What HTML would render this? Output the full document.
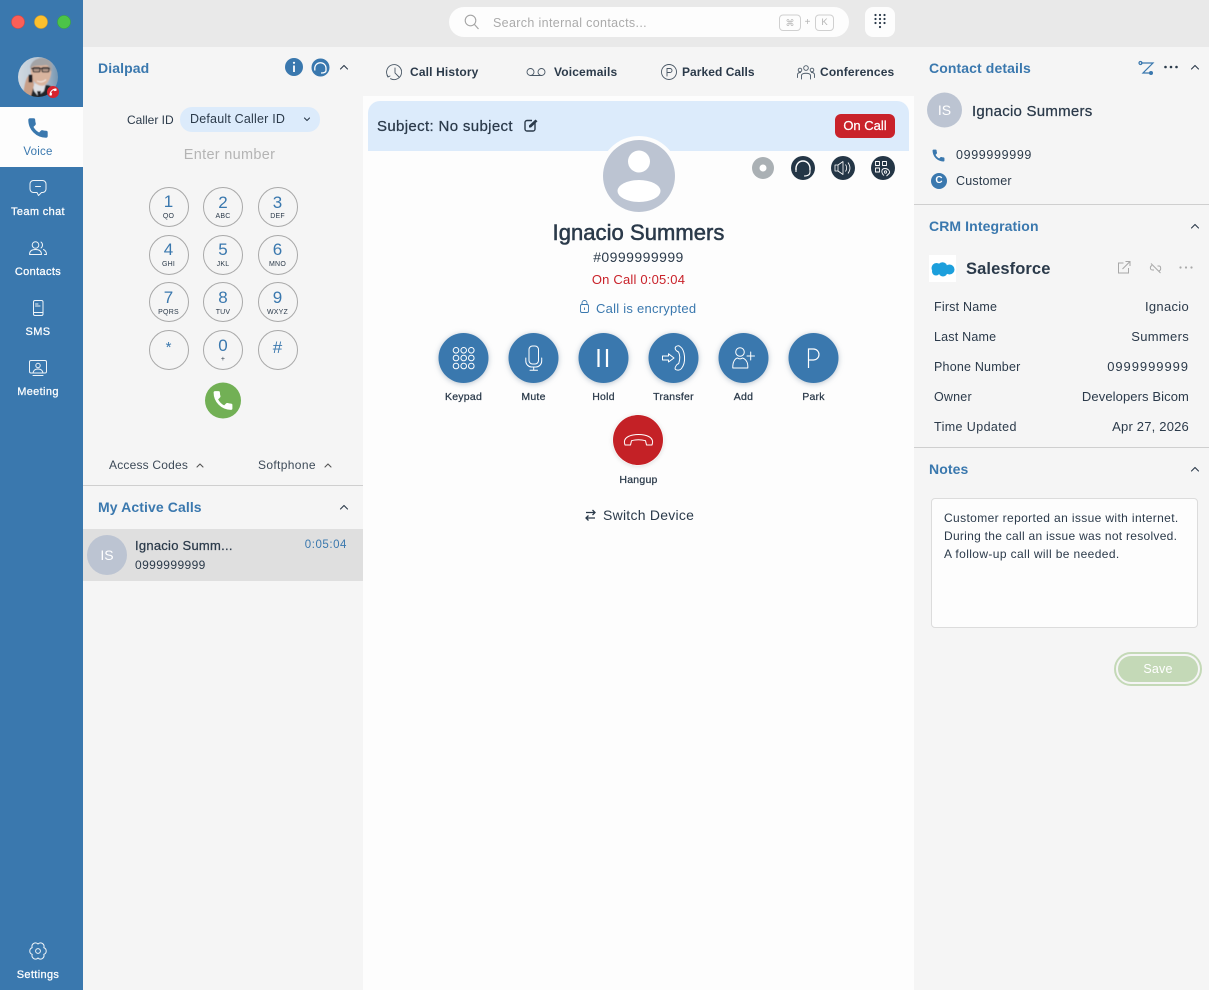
<!DOCTYPE html>
<html><head><meta charset="utf-8"><title>Softphone</title>
<style>
html,body{margin:0;padding:0}
body{width:1209px;height:990px;position:relative;overflow:hidden;background:#f5f5f5;font-family:"Liberation Sans",sans-serif;color:#2b3a4a;font-size:12px}
.b{position:absolute}
.t{position:absolute;white-space:nowrap;line-height:20px;height:20px;margin-top:-10px}
.c{transform:translateX(-50%)}
.m{-webkit-text-stroke:.25px currentColor}
.h{font-size:14px;font-weight:bold;color:#3a78ae;letter-spacing:.1px}
.w{color:#fff}
.bl{color:#3a78ae}
.k{position:absolute;width:38px;height:38px;border:1px solid #a9a9a9;border-radius:50%;margin:-20px 0 0 -20px}
.d{font-size:17px;color:#3a78ae}
.l{font-size:7px;color:#2b3a4a;letter-spacing:.2px}
.n{font-size:12.5px;letter-spacing:.2px}
.v{font-size:13px;letter-spacing:.3px}
.s{font-size:11px;letter-spacing:.35px}
.tab{font-size:12px;font-weight:bold;color:#2b3a4a;letter-spacing:.15px}
.a{font-size:10.5px;color:#2b3a4a;letter-spacing:.25px}
svg{position:absolute;left:0;top:0}
</style></head><body>
<div class="b" style="left:0;top:0;width:83px;height:990px;background:#3a78ae"></div>
<div class="b" style="left:83px;top:0;width:1126px;height:47px;background:#e9e9e9"></div>
<div class="b" style="left:0;top:107px;width:83px;height:60px;background:#fdfdfd"></div>
<div class="b" style="left:363px;top:96px;width:551px;height:894px;background:#fdfdfd"></div>
<div class="b" style="left:368px;top:101px;width:541px;height:50px;background:#dcebfb;border-radius:12px 12px 0 0"></div>
<div class="b" style="left:449px;top:7px;width:400px;height:30px;background:#fdfdfd;border-radius:15px"></div>
<div class="b" style="left:865px;top:7px;width:30px;height:30px;background:#fdfdfd;border-radius:8px"></div>
<div class="b" style="left:180px;top:107px;width:140px;height:25px;background:#dcebfb;border-radius:12px"></div>
<div class="b" style="left:83px;top:485px;width:280px;height:1px;background:#cfcfcf"></div>
<div class="b" style="left:83px;top:529px;width:280px;height:52px;background:#dfdfdf"></div>
<div class="b" style="left:914px;top:204px;width:295px;height:1px;background:#cfcfcf"></div>
<div class="b" style="left:914px;top:447px;width:295px;height:1px;background:#cfcfcf"></div>
<div class="b" style="left:929px;top:255px;width:27px;height:27px;background:#fff"></div>
<div class="b" style="left:931px;top:498px;width:265px;height:128px;background:#fdfdfd;border:1px solid #dcdcdc;border-radius:4px"></div>
<div class="b" style="left:835px;top:114px;width:60px;height:24px;background:#c9222a;border-radius:6px"></div>
<div class="b" style="left:1114px;top:652px;width:84px;height:30px;border:2px solid #c4d9b7;border-radius:17px"></div>
<div class="b" style="left:1118px;top:656px;width:80px;height:26px;background:#c4d9b7;border-radius:13px"></div>

<svg width="1209" height="990" viewBox="0 0 1209 990">
<defs>
<symbol id="ph" viewBox="0 0 24 24" overflow="visible"><path d="M6.62 10.79c1.44 2.83 3.76 5.14 6.59 6.59l2.2-2.2c.27-.27.67-.36 1.02-.24 1.12.37 2.33.57 3.57.57.55 0 1 .45 1 1V20c0 .55-.45 1-1 1-9.39 0-17-7.61-17-17 0-.55.45-1 1-1h3.5c.55 0 1 .45 1 1 0 1.25.2 2.45.57 3.57.11.35.03.74-.25 1.02l-2.2 2.2z"/></symbol>
<clipPath id="av"><circle cx="38" cy="77" r="20"/></clipPath>
<clipPath id="big"><circle cx="639" cy="176" r="36"/></clipPath>
<linearGradient id="bgp" x1="0" y1="0" x2="1" y2="0"><stop offset="0" stop-color="#d3dbe3"/><stop offset=".6" stop-color="#b4c3d1"/><stop offset="1" stop-color="#6f90ad"/></linearGradient>
<filter id="soft" x="-10%" y="-10%" width="120%" height="120%"><feGaussianBlur stdDeviation=".45"/></filter>
</defs>
<!-- traffic lights -->
<circle cx="18" cy="22" r="6.5" fill="#fb5f57" stroke="#e0443e" stroke-width=".6"/>
<circle cx="41" cy="22" r="6.5" fill="#fcc02e" stroke="#dfa123" stroke-width=".6"/>
<circle cx="64" cy="22" r="6.5" fill="#4cc448" stroke="#3aa935" stroke-width=".6"/>
<!-- user photo -->
<g clip-path="url(#av)"><g filter="url(#soft)">
<rect x="16" y="55" width="44" height="44" fill="url(#bgp)"/>
<path d="M20 100 C21 90 29 86 36 85 L48 85 C54 87 58 92 60 100Z" fill="#24252c"/>
<path d="M32 84 L46 83 L44 91 L38 96 L34 91Z" fill="#dfe1e5"/>
<path d="M37 91 L41 91 L40 97 L38 97Z" fill="#1a1a20"/>
<path d="M31 66 C34 60 47 60 51 67 C52 74 50 81 45 85 C41 87 36 85 33 80 C31 76 30 71 31 66Z" fill="#d9b49e"/>
<path d="M30 68 C31 60 39 57 45 58 C50 59 53 63 52 71 L50 71 C50 67 48 65 46 65 C40 66 35 65 32 67Z" fill="#a3a3a5"/>
<path d="M31 68.5 H50" stroke="#1f1f24" stroke-width="1.300"/>
<rect x="33" y="67.500" width="7" height="4.500" rx="1.500" fill="#8f7d74" fill-opacity=".55" stroke="#1f1f24" stroke-width="1.100"/>
<rect x="42" y="67.500" width="7" height="4.500" rx="1.500" fill="#8f7d74" fill-opacity=".55" stroke="#1f1f24" stroke-width="1.100"/>
<path d="M37 81 C40 82.500 44 82 46 79.500" stroke="#f0e4dc" stroke-width="1.200" fill="none"/>
<path d="M23 96 C24 88 25 80 28 76 L33 78 L34 85 L31 96Z" fill="#c89f88"/>
<rect x="28.500" y="74.500" width="4" height="8" rx="1" fill="#1c1c20"/>
</g></g>
<circle cx="53" cy="92" r="6" fill="#d8232d"/>
<use href="#ph" x="48.5" y="87.5" width="9" height="9" fill="#fff" stroke="#fff" stroke-width="1" transform="rotate(90 53 92)"/>
<!-- sidebar icons -->
<g transform="translate(26 116)"><use href="#ph" width="24" height="24" fill="#3a78ae" stroke="#3a78ae" stroke-width="1.400" stroke-linejoin="round"/></g>
<g fill="none" stroke="#fff" stroke-width="1" stroke-linejoin="round" stroke-linecap="round" opacity=".92">
<path d="M33.5 180.5 H42.5 A3.5 3.5 0 0 1 46 184 V189 A3.5 3.5 0 0 1 42.5 192.5 H41.5 L38.5 195.5 L37 192.5 H33.5 A3.5 3.5 0 0 1 30 189 V184 A3.5 3.5 0 0 1 33.5 180.5Z"/>
<path d="M35.5 186.5 H40.5"/>
<circle cx="35.5" cy="245" r="3.3"/>
<path d="M29.5 254.5 C29.5 250.5 32 249.5 35.5 249.5 C39 249.5 41.5 250.5 41.5 254.5Z"/>
<path d="M41 242 C43 243.5 43 246.5 41 248 M43.5 249.5 C45.5 250.5 46.5 252 46.5 254.5 H44.5"/>
<rect x="33.5" y="300.5" width="9.5" height="15" rx="1.5"/>
<path d="M33.5 312.5 H43 M35.5 304 H38 M35.5 306 H40"/>
<rect x="29.5" y="360.5" width="17" height="12.5" rx="1.5"/>
<path d="M33 375.5 H43"/>
<circle cx="38" cy="365.5" r="2.2"/>
<path d="M33 373 C33.5 370 35.5 369 38 369 C40.5 369 42.5 370 43 373"/>
<path d="M38 944 A3.5 3.5 0 0 1 43.8 947.6 A3.6 3.6 0 0 1 43.8 954.4 A3.5 3.5 0 0 1 38 958 A3.5 3.5 0 0 1 32.2 954.4 A3.6 3.6 0 0 1 32.2 947.6 A3.5 3.5 0 0 1 38 944Z"/>
<circle cx="38" cy="951" r="2.4"/>
</g>
<!-- dialpad header -->
<circle cx="294" cy="67" r="9" fill="#3a78ae"/>
<circle cx="320.500" cy="67.500" r="9" fill="#3a78ae"/>
<circle cx="294" cy="62.800" r="1.100" fill="#fff"/><path d="M294 65.500V72" stroke="#fff" stroke-width="1.800"/>
<path d="M314.800 68.500 C314.800 60.800 326 60.800 326 68.500 M314.800 67.500 v3 M326 67.500 v3 M326 70.500 C326 72.500 323.500 73 321 73" fill="none" stroke="#fff" stroke-width="1.300"/>
<g fill="none" stroke="#2b3a4a" stroke-width="1.100" stroke-linecap="round" stroke-linejoin="round">
<path d="M340.500 69 L344 65.500 L347.500 69"/>
<path d="M340.500 509 L344 505.500 L347.500 509"/>
<path d="M1191.500 69 L1195 65.500 L1198.500 69"/>
<path d="M1191.500 228 L1195 224.500 L1198.500 228"/>
<path d="M1191.500 471 L1195 467.500 L1198.500 471"/>
<path d="M304.500 118 L307 120.500 L309.500 118"/>
<path d="M197 467 L200 464 L203 467" stroke="#555"/>
<path d="M325 467 L328 464 L331 467" stroke="#555"/>
</g>
<!-- green call -->
<circle cx="223" cy="400.500" r="18" fill="#72b055"/>
<use href="#ph" x="211" y="388.500" width="24" height="24" fill="#fff" stroke="#fff" stroke-width=".8"/>
<!-- search -->
<circle cx="470.500" cy="20.500" r="5.300" fill="none" stroke="#a5a5a5" stroke-width="1.100"/><path d="M474.500 24.500 L478.500 29" stroke="#a5a5a5" stroke-width="1.200"/>
<rect x="779.500" y="15" width="21" height="15.500" rx="3.500" fill="none" stroke="#d0d0d0"/>
<rect x="815.500" y="15" width="18" height="15.500" rx="3.500" fill="none" stroke="#d0d0d0"/>
<g fill="#2b3a4a"><circle cx="875.500" cy="15" r="1.100"/><circle cx="880" cy="15" r="1.100"/><circle cx="884.500" cy="15" r="1.100"/><circle cx="875.500" cy="19" r="1.100"/><circle cx="880" cy="19" r="1.100"/><circle cx="884.500" cy="19" r="1.100"/><circle cx="875.500" cy="23" r="1.100"/><circle cx="880" cy="23" r="1.100"/><circle cx="884.500" cy="23" r="1.100"/><circle cx="880" cy="27" r="1.100"/></g>
<!-- tabs -->
<g fill="none" stroke="#4a5866" stroke-width=".9" stroke-linecap="round">
<path d="M388 76.500 A7.500 7.500 0 1 1 390.500 78.700"/><path d="M395 68 V73 L399 77"/><path d="M387 75 L388 77 L390 76"/>
<circle cx="530.500" cy="72" r="3.500"/><circle cx="541.500" cy="72" r="3.500"/><path d="M530.500 75.500 H541.500"/>
<circle cx="669" cy="72" r="7.500"/>
<path d="M667 76 V68.500 H670 A2 2 0 0 1 670 72.500 H667"/>
<circle cx="806" cy="68" r="2.300"/><circle cx="800" cy="70" r="1.800"/><circle cx="812" cy="70" r="1.800"/>
<path d="M801.500 79 V75.500 C801.500 72.500 810.500 72.500 810.500 75.500 V79 M797.500 77.500 V75 C797.500 73 799 72.500 800.500 72.500 M814.500 77.500 V75 C814.500 73 813 72.500 811.500 72.500"/>
</g>
<!-- subject edit -->
<path d="M535 123 V129 A2 2 0 0 1 533 131 H527 A2 2 0 0 1 525 129 V122.500 A2 2 0 0 1 527 120.500 H532" fill="none" stroke="#2b3a4a" stroke-width="1.400"/>
<path d="M529 127.500 V125.500 L535.500 119.500 L537.500 121.200 L531 127.500Z" fill="#2b3a4a"/>
<!-- big avatar -->
<circle cx="639" cy="176" r="40" fill="#fdfdfd"/>
<circle cx="639" cy="176" r="36" fill="#bcc4d2"/>
<g clip-path="url(#big)"><circle cx="639" cy="161.500" r="11" fill="#fff"/><ellipse cx="639" cy="191" rx="21.500" ry="11" fill="#fff"/></g>
<!-- small round action icons -->
<circle cx="763" cy="168" r="11" fill="#aab0b4"/><circle cx="763" cy="168" r="3.500" fill="#fff"/>
<circle cx="803" cy="168" r="12" fill="#243646"/>
<circle cx="843" cy="168" r="12" fill="#243646"/>
<circle cx="883" cy="168" r="12" fill="#243646"/>
<g fill="none" stroke="#fff" stroke-width="1.100" stroke-linejoin="round">
<path d="M796 170 C795 158 811 158 810 170" stroke-width="1.400"/><path d="M796 168 v4 M810 168 v4 M810 172 C810 175 807 176 804 176"/>
<path d="M835 165 H838 L843 161.500 V174.500 L838 171 H835Z" stroke-width=".8"/><path d="M838 165 V171 M845.500 164.500 C847 166.500 847 169.500 845.500 171.500 M848 162.500 C850.500 166 850.500 170 848 173.500" stroke-width=".8"/>
<path d="M875.500 161.500 h4 v4 h-4z M882.500 161.500 h4 v4 h-4z M875.500 168 h4 v4 h-4z" stroke-width=".9"/>
<path d="M884 175.500 C881 173 881 168.500 885 168.500 C888 168.500 890 171 889.500 173 L886.500 176" stroke-width=".9"/><circle cx="885.500" cy="172" r="1.200" stroke-width=".8"/>
</g>
<!-- lock -->
<g fill="none" stroke="#3a78ae" stroke-width=".9"><rect x="580.500" y="304.500" width="8" height="8" rx="1.500"/><path d="M582 304.500 V303 A2.500 2.500 0 0 1 587 303 V304.500"/><path d="M584.500 307.500 V310"/></g>
<!-- action buttons -->
<g style="filter:drop-shadow(0 1px 3px rgba(60,90,120,.35))">
<circle cx="463.500" cy="358" r="25" fill="#3a78ae"/><circle cx="533.500" cy="358" r="25" fill="#3a78ae"/><circle cx="603.500" cy="358" r="25" fill="#3a78ae"/><circle cx="673.500" cy="358" r="25" fill="#3a78ae"/><circle cx="743.500" cy="358" r="25" fill="#3a78ae"/><circle cx="813.500" cy="358" r="25" fill="#3a78ae"/>
</g>
<circle cx="638" cy="440" r="25.500" fill="#fff" style="filter:drop-shadow(0 1px 2px rgba(0,0,0,.12))"/>
<circle cx="638" cy="440" r="25" fill="#c42126"/>
<g fill="none" stroke="#fff" stroke-width="1" stroke-linejoin="round" stroke-linecap="round">
<circle cx="456" cy="350.300" r="2.800"/><circle cx="463.700" cy="350.300" r="2.800"/><circle cx="471.300" cy="350.300" r="2.800"/><circle cx="456" cy="358" r="2.800"/><circle cx="463.700" cy="358" r="2.800"/><circle cx="471.300" cy="358" r="2.800"/><circle cx="456" cy="366" r="2.800"/><circle cx="463.700" cy="366" r="2.800"/><circle cx="471.300" cy="366" r="2.800"/>
<rect x="529" y="346" width="9.500" height="18" rx="3.500"/>
<path d="M525.800 358 V361 A6 6 0 0 0 531.500 367 H536 A6 6 0 0 0 541.700 361 V358 M533.700 367 V370 M530 370.300 H537.500"/>
<path d="M598.500 349 V367 M607 349 V367" stroke-width="2.200" stroke-linecap="butt"/>
<path d="M662.500 356 H668.500 V353.800 L674 358 L668.500 362 V360 H662.500Z"/>
<path d="M675.500 347 C677 345.500 679 345.500 680 346.500 C685 350 686.500 362 681.500 368.500 C680 370.500 677 370.500 675.500 369.500 C674.500 368.500 675 367 677 364.500 C678.500 364 679 363.500 679 362.500 C680 359 680 355 678.500 352 C676 351 674.500 349 675.500 347Z"/>
<circle cx="740" cy="352" r="4.300"/><path d="M732.800 368 C732.500 362 735 358.500 737.500 358 C739 359 741 359 742.500 358 C745.500 359 748.200 362 747.800 368Z"/>
<path d="M747 356 H754.500 M750.700 352 V360"/>
<path d="M808.500 368 V349 H813.500 A5.500 5.500 0 0 1 813.500 360 H808.500" stroke-width="1.200" stroke-linecap="butt" stroke-linejoin="miter"/>
<path d="M624.500 443 C623.500 437 631 434.500 638.500 434.500 C646 434.500 653.500 437 652.500 443 L652 445 L646.500 445 L645.500 440.700 C641 439.500 636 439.500 631.500 440.700 L630.500 445 L625 445Z"/>
</g>
<!-- switch device -->
<g fill="none" stroke="#2b3a4a" stroke-width="1.300"><path d="M586 512.500 H595 M592.500 510 L595 512.500 L592.500 515"/><path d="M595 518 H586 M588.500 515.500 L586 518 L588.500 520.500"/></g>
<!-- right panel icons -->
<g fill="none" stroke="#3a78ae" stroke-width="1.200"><path d="M1141 63 H1153 L1143 73 H1150"/><circle cx="1140.500" cy="63" r="1.500"/></g><circle cx="1151" cy="73" r="2" fill="#3a78ae"/>
<g fill="#2b3a4a"><circle cx="1165.500" cy="67" r="1.300"/><circle cx="1171" cy="67" r="1.300"/><circle cx="1176.500" cy="67" r="1.300"/></g>
<use href="#ph" x="931" y="148" width="15" height="15" fill="#3a78ae" stroke="#3a78ae" stroke-width="1"/>
<circle cx="939" cy="181" r="8" fill="#3a78ae"/>
<!-- salesforce -->
<g fill="#1c9fdc"><circle cx="936.500" cy="268" r="5"/><circle cx="942.500" cy="267" r="4.800"/><circle cx="949.500" cy="269.500" r="5"/><circle cx="943" cy="272" r="4.500"/><circle cx="936" cy="271.500" r="4"/></g>
<g fill="none" stroke="#a8a8a8" stroke-width="1"><path d="M1128.500 268 V273 H1118.500 V263 H1123.500 M1122.500 269 L1130 261.500 M1125.500 261.500 H1130 V266"/><path d="M1152 265.500 C1149.500 266.500 1150 270 1152.500 270 L1154 270 M1157.500 266 L1159 266 C1161 266 1161.500 270 1159 271 M1151 263.500 L1160.500 273"/></g>
<g fill="#a8a8a8"><circle cx="1180.500" cy="267.500" r="1.100"/><circle cx="1186" cy="267.500" r="1.100"/><circle cx="1191.500" cy="267.500" r="1.100"/></g>
<!-- avatars -->
<circle cx="107" cy="555" r="20" fill="#bcc4d2"/>
<circle cx="944.500" cy="110" r="17.500" fill="#bcc4d2"/>
</svg>

<!-- sidebar labels -->
<div class="t c bl" style="left:38px;top:152px;font-size:11.500px;letter-spacing:.2px">Voice</div>
<div class="t c w m s" style="left:38px;top:212px">Team chat</div>
<div class="t c w m s" style="left:38px;top:272px">Contacts</div>
<div class="t c w m s" style="left:38px;top:332px">SMS</div>
<div class="t c w m s" style="left:38px;top:392px">Meeting</div>
<div class="t c w m s" style="left:38px;top:975px">Settings</div>

<!-- dialpad -->
<div class="t h" style="left:98px;top:68px">Dialpad</div>
<div class="t" style="left:127px;top:120px;font-size:12px">Caller ID</div>
<div class="t" style="left:190px;top:119px;font-size:12.500px;letter-spacing:.2px">Default Caller ID</div>
<div class="t c" style="left:229.500px;top:155px;font-size:14.500px;color:#b4b4b4;letter-spacing:.3px">Enter number</div>

<div class="k" style="left:168.500px;top:207px"></div><div class="k" style="left:223px;top:207px"></div><div class="k" style="left:277.500px;top:207px"></div>
<div class="k" style="left:168.500px;top:254.500px"></div><div class="k" style="left:223px;top:254.500px"></div><div class="k" style="left:277.500px;top:254.500px"></div>
<div class="k" style="left:168.500px;top:302px"></div><div class="k" style="left:223px;top:302px"></div><div class="k" style="left:277.500px;top:302px"></div>
<div class="k" style="left:168.500px;top:350px"></div><div class="k" style="left:223px;top:350px"></div><div class="k" style="left:277.500px;top:350px"></div>

<div class="t c d" style="left:168.500px;top:202px">1</div><div class="t c l" style="left:168.500px;top:217px">QO</div>
<div class="t c d" style="left:223px;top:203px">2</div><div class="t c l" style="left:223px;top:217px">ABC</div>
<div class="t c d" style="left:277.500px;top:203px">3</div><div class="t c l" style="left:277.500px;top:217px">DEF</div>
<div class="t c d" style="left:168.500px;top:250px">4</div><div class="t c l" style="left:168.500px;top:264.500px">GHI</div>
<div class="t c d" style="left:223px;top:250px">5</div><div class="t c l" style="left:223px;top:264.500px">JKL</div>
<div class="t c d" style="left:277.500px;top:250px">6</div><div class="t c l" style="left:277.500px;top:264.500px">MNO</div>
<div class="t c d" style="left:168.500px;top:298px">7</div><div class="t c l" style="left:168.500px;top:312.500px">PQRS</div>
<div class="t c d" style="left:223px;top:298px">8</div><div class="t c l" style="left:223px;top:312.500px">TUV</div>
<div class="t c d" style="left:277.500px;top:298px">9</div><div class="t c l" style="left:277.500px;top:312.500px">WXYZ</div>
<div class="t c d" style="left:168.500px;top:348px;font-size:15px">*</div>
<div class="t c d" style="left:223px;top:346px">0</div><div class="t c l" style="left:223px;top:360px">+</div>
<div class="t c d" style="left:277.500px;top:348px">#</div>

<div class="t" style="left:109px;top:465px;font-size:12px;color:#3d4a58;letter-spacing:.2px">Access Codes</div>
<div class="t" style="left:258px;top:465px;font-size:12px;color:#3d4a58;letter-spacing:.35px">Softphone</div>

<div class="t h" style="left:98px;top:507px">My Active Calls</div>
<div class="t c w" style="left:107px;top:555px;font-size:14px">IS</div>
<div class="t m" style="left:135px;top:546px;font-size:13px;letter-spacing:.25px">Ignacio Summ...</div>
<div class="t" style="left:135px;top:565px;font-size:12px;letter-spacing:.4px">0999999999</div>
<div class="t bl" style="right:862px;top:545px;font-size:11.500px;letter-spacing:.55px">0:05:04</div>

<!-- top bar -->
<div class="t" style="left:493px;top:23px;font-size:12.500px;color:#ababab;letter-spacing:.35px">Search internal contacts...</div>
<div class="t c" style="left:790px;top:23px;font-size:9px;color:#b5b5b5">&#8984;</div>
<div class="t c" style="left:807.500px;top:23px;font-size:10px;color:#b5b5b5">+</div>
<div class="t c" style="left:824.500px;top:23px;font-size:9.500px;color:#b5b5b5">K</div>

<!-- tabs -->
<div class="t tab" style="left:410px;top:72px">Call History</div>
<div class="t tab" style="left:554px;top:72px">Voicemails</div>
<div class="t tab" style="left:682px;top:72px;letter-spacing:.05px">Parked Calls</div>
<div class="t tab" style="left:820px;top:72px">Conferences</div>

<!-- center -->
<div class="t m" style="left:377px;top:127px;font-size:15px;letter-spacing:.35px">Subject: No subject</div>
<div class="t c w m" style="left:865px;top:126px;font-size:13px">On Call</div>
<div class="t c" style="left:638.500px;top:233px;font-size:22px;letter-spacing:.05px;-webkit-text-stroke:.55px currentColor">Ignacio Summers</div>
<div class="t c" style="left:638.500px;top:257px;font-size:14px;letter-spacing:.45px">#0999999999</div>
<div class="t c" style="left:638.500px;top:280px;font-size:13px;color:#c9222a;letter-spacing:.2px">On Call 0:05:04</div>
<div class="t bl" style="left:596px;top:309px;font-size:13px;letter-spacing:.25px">Call is encrypted</div>
<div class="t c a m" style="left:463.500px;top:397px">Keypad</div>
<div class="t c a m" style="left:533.500px;top:397px">Mute</div>
<div class="t c a m" style="left:603.500px;top:397px">Hold</div>
<div class="t c a m" style="left:673.500px;top:397px">Transfer</div>
<div class="t c a m" style="left:743.500px;top:397px">Add</div>
<div class="t c a m" style="left:813.500px;top:397px">Park</div>
<div class="t c a m" style="left:638.500px;top:480px">Hangup</div>
<div class="t" style="left:603px;top:515px;font-size:14px;letter-spacing:.25px">Switch Device</div>

<!-- right -->
<div class="t h" style="left:929px;top:68px">Contact details</div>
<div class="t c w" style="left:944.500px;top:110px;font-size:14px">IS</div>
<div class="t m" style="left:972px;top:112px;font-size:15px;letter-spacing:.25px">Ignacio Summers</div>
<div class="t n" style="left:956px;top:155px;letter-spacing:.65px">0999999999</div>
<div class="t c w" style="left:939px;top:181px;font-size:10px;font-weight:bold">C</div>
<div class="t n" style="left:956px;top:181px">Customer</div>
<div class="t h" style="left:929px;top:226px">CRM Integration</div>
<div class="t" style="left:966px;top:269px;font-size:16.500px;font-weight:bold;letter-spacing:.1px">Salesforce</div>
<div class="t n" style="left:934px;top:307px">First Name</div><div class="t v" style="right:20px;top:307px">Ignacio</div>
<div class="t n" style="left:934px;top:337px">Last Name</div><div class="t v" style="right:20px;top:337px">Summers</div>
<div class="t n" style="left:934px;top:367px">Phone Number</div><div class="t v" style="right:20px;top:367px;letter-spacing:.95px">0999999999</div>
<div class="t n" style="left:934px;top:397px">Owner</div><div class="t v" style="right:20px;top:397px;letter-spacing:.1px">Developers Bicom</div>
<div class="t n" style="left:934px;top:427px;letter-spacing:.4px">Time Updated</div><div class="t v" style="right:20px;top:427px;letter-spacing:.2px">Apr 27, 2026</div>
<div class="t h" style="left:929px;top:469px">Notes</div>
<div class="t" style="left:944px;top:518px;font-size:12px;letter-spacing:.37px">Customer reported an issue with internet.</div>
<div class="t" style="left:944px;top:536px;font-size:12px;letter-spacing:.28px">During the call an issue was not resolved.</div>
<div class="t" style="left:944px;top:554px;font-size:12px;letter-spacing:.38px">A follow-up call will be needed.</div>
<div class="t c w" style="left:1158px;top:669px;font-size:12.500px;letter-spacing:.2px">Save</div>
</body></html>
